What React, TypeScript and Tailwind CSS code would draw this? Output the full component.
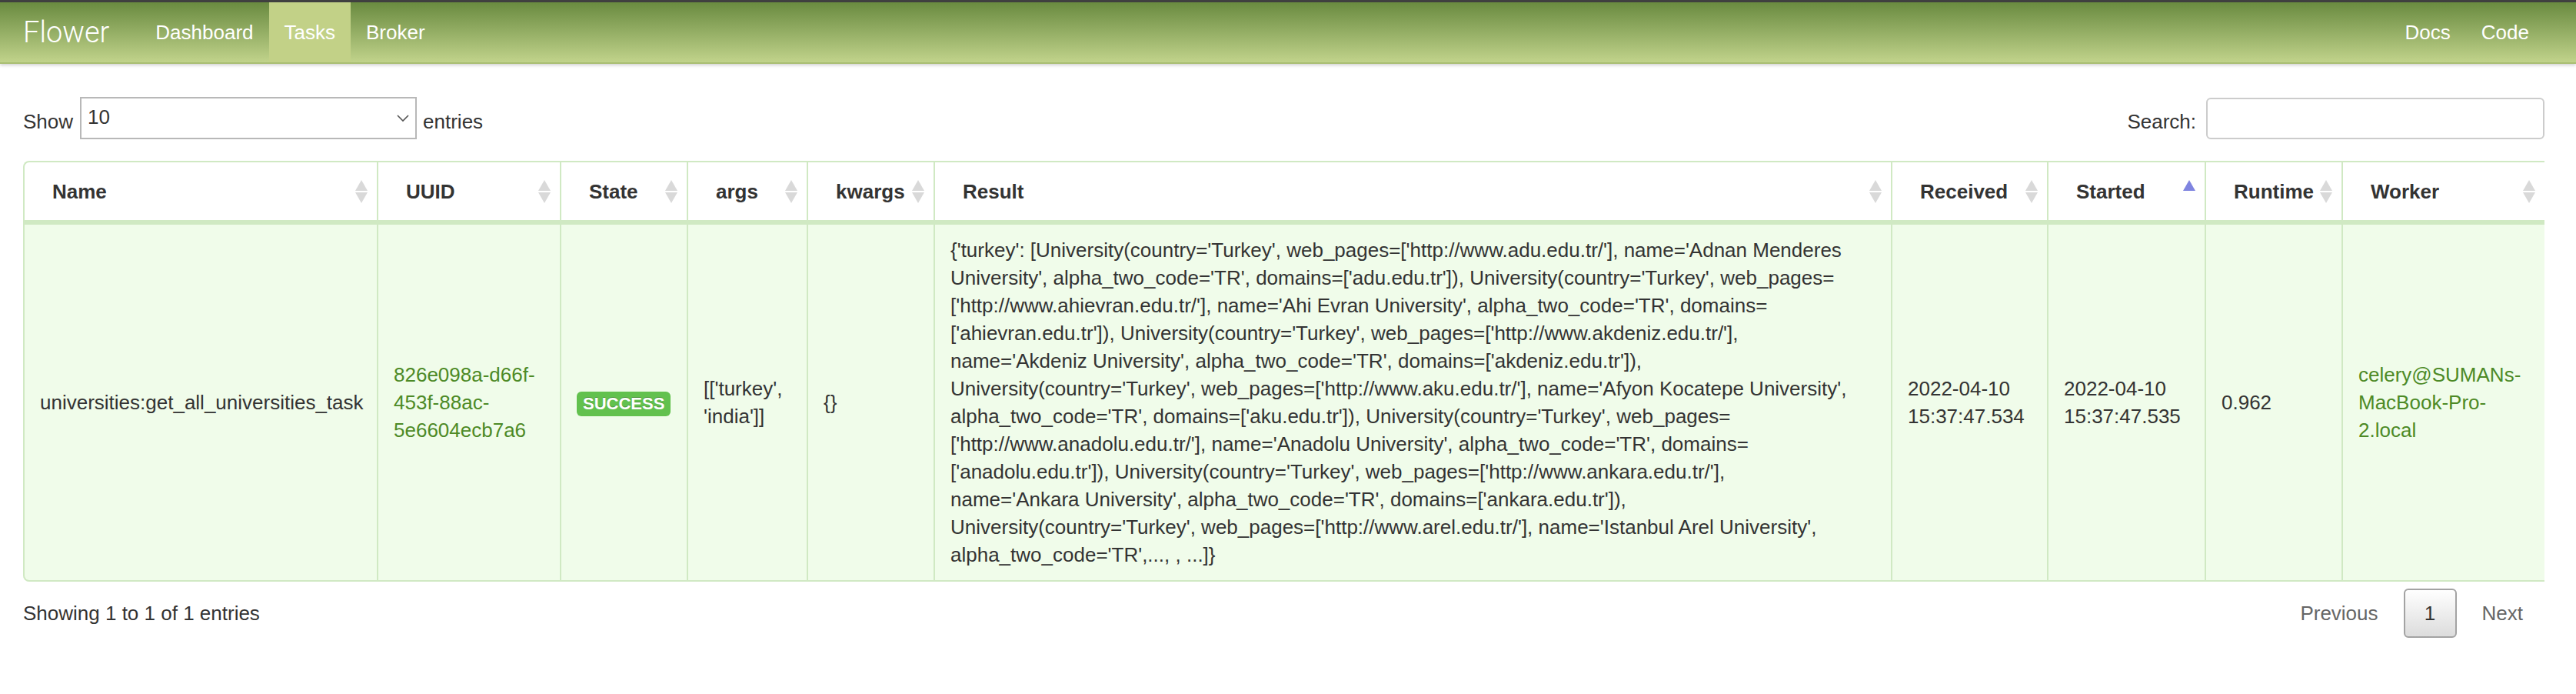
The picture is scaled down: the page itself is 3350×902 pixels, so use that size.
import React from 'react';

const COLS = [
  { name: 'Name', width: 460 },
  { name: 'UUID', width: 238 },
  { name: 'State', width: 165 },
  { name: 'args', width: 156 },
  { name: 'kwargs', width: 165 },
  { name: 'Result', width: 1245 },
  { name: 'Received', width: 203 },
  { name: 'Started', width: 205, sorted: true },
  { name: 'Runtime', width: 178 },
  { name: 'Worker', width: 264 },
];

const RESULT_LINES = [
  "{'turkey': [University(country='Turkey', web_pages=['http://www.adu.edu.tr/'], name='Adnan Menderes",
  "University', alpha_two_code='TR', domains=['adu.edu.tr']), University(country='Turkey', web_pages=",
  "['http://www.ahievran.edu.tr/'], name='Ahi Evran University', alpha_two_code='TR', domains=",
  "['ahievran.edu.tr']), University(country='Turkey', web_pages=['http://www.akdeniz.edu.tr/'],",
  "name='Akdeniz University', alpha_two_code='TR', domains=['akdeniz.edu.tr']),",
  "University(country='Turkey', web_pages=['http://www.aku.edu.tr/'], name='Afyon Kocatepe University',",
  "alpha_two_code='TR', domains=['aku.edu.tr']), University(country='Turkey', web_pages=",
  "['http://www.anadolu.edu.tr/'], name='Anadolu University', alpha_two_code='TR', domains=",
  "['anadolu.edu.tr']), University(country='Turkey', web_pages=['http://www.ankara.edu.tr/'],",
  "name='Ankara University', alpha_two_code='TR', domains=['ankara.edu.tr']),",
  "University(country='Turkey', web_pages=['http://www.arel.edu.tr/'], name='Istanbul Arel University',",
  "alpha_two_code='TR',..., , ...]}",
];

function SortIcon({ asc }: { asc?: boolean }) {
  return (
    <svg width="16" height="30" viewBox="0 0 16 30" className="absolute right-[12px] top-[23px]">
      {asc ? (
        <polygon points="8,0 16,14 0,14" fill="#7f84e0" />
      ) : (
        <>
          <polygon points="8,0 16,14 0,14" fill="#d9d9d9" />
          <polygon points="0,16 16,16 8,30" fill="#d9d9d9" />
        </>
      )}
    </svg>
  );
}

function Lines({ lines }: { lines: string[] }) {
  return (
    <>
      {lines.map((l, i) => (
        <div key={i} className="whitespace-nowrap">
          {l}
        </div>
      ))}
    </>
  );
}

function App() {
  const navItems = ['Dashboard', 'Tasks', 'Broker'];

  return (
    <div className="min-h-screen bg-white font-['Liberation_Sans',Arial,sans-serif] text-[26px] leading-[36px] text-[#333]">
      <div className="h-[3px] bg-[#404040]" />
      <nav className="relative z-10 h-[80px] flex items-stretch pl-[30px] pr-[41px] bg-linear-to-b from-[#6a8b40] to-[#c1d38b] border-b-2 border-[#a9be73] shadow-[0_2px_4px_rgba(0,0,0,0.18)]">
        <a className="self-center font-['Roboto',Arial,sans-serif] font-light text-[38px] leading-[44px] text-white">
          Flower
        </a>
        <ul className="ml-[40px] flex">
          {navItems.map((item) => (
            <li
              key={item}
              className={
                'flex items-center px-[20px] text-white ' +
                (item === 'Tasks' ? 'bg-[#c2d187]' : '')
              }
            >
              {item}
            </li>
          ))}
        </ul>
        <ul className="ml-auto flex">
          <li className="flex items-center px-[20px] text-white">Docs</li>
          <li className="flex items-center px-[20px] text-white">Code</li>
        </ul>
      </nav>

      <div className="pl-[30px] pr-[41px]">
        <div className="mt-[43px] flex h-[55px] items-center justify-between">
          <label className="flex items-center">
            <span className="pt-[8px]">Show</span>
            <div className="relative ml-[9px] mr-[8px] flex h-[55px] w-[438px] items-center border-2 border-[#b8b8b8] bg-white pl-[8px]">
              <span className="pb-[4px]">10</span>
              <svg
                width="16"
                height="10"
                viewBox="0 0 16 10"
                className="absolute right-[8px] top-[21px]"
                fill="none"
                stroke="#555"
                strokeWidth="1.6"
              >
                <polyline points="1,1 8,8 15,1" />
              </svg>
            </div>
            <span className="pt-[8px]">entries</span>
          </label>
          <label className="flex items-center">
            <span className="pt-[8px]">Search:</span>
            <input
              type="text"
              className="ml-[13px] h-[54px] w-[440px] rounded-[6px] border-2 border-[#cccccc] bg-white outline-none"
            />
          </label>
        </div>

        <div className="mt-[28px] overflow-hidden">
          <table className="w-full table-fixed border-separate border-spacing-0">
            <colgroup>
              {COLS.map((c) => (
                <col key={c.name} style={{ width: c.width }} />
              ))}
            </colgroup>
            <thead>
              <tr>
                {COLS.map((c, i) => (
                  <th
                    key={c.name}
                    className={
                      'relative border-l-2 border-t-2 border-b-[6px] border-[#d0e9c3] bg-white pl-[36px] pr-[20px] pt-[20px] pb-[19px] text-left font-bold text-[#333] ' +
                      (i === 0 ? 'rounded-tl-[8px]' : '')
                    }
                  >
                    {c.name}
                    <SortIcon asc={c.sorted} />
                  </th>
                ))}
              </tr>
            </thead>
            <tbody>
              <tr className="bg-[#f0fcea] align-middle">
                <td className="rounded-bl-[8px] border-l-2 border-b-2 border-[#d0e9c3] px-[20px] py-[15px] whitespace-nowrap">
                  universities:get_all_universities_task
                </td>
                <td className="border-l-2 border-b-2 border-[#d0e9c3] px-[20px] py-[15px] text-[#4d8a26]">
                  <Lines lines={['826e098a-d66f-', '453f-88ac-', '5e6604ecb7a6']} />
                </td>
                <td className="border-l-2 border-b-2 border-[#d0e9c3] px-[20px] py-[15px]">
                  <span className="inline-flex h-[32px] items-center rounded-[6px] bg-[#62c14e] px-[8px] text-[22px] font-bold leading-[32px] text-white [text-shadow:0_-1px_0_rgba(0,0,0,0.25)]">
                    SUCCESS
                  </span>
                </td>
                <td className="border-l-2 border-b-2 border-[#d0e9c3] px-[20px] py-[15px]">
                  <Lines lines={["[['turkey',", "'india']]"]} />
                </td>
                <td className="border-l-2 border-b-2 border-[#d0e9c3] px-[20px] py-[15px]">{'{}'}</td>
                <td className="border-l-2 border-b-2 border-[#d0e9c3] px-[20px] py-[15px]">
                  <Lines lines={RESULT_LINES} />
                </td>
                <td className="border-l-2 border-b-2 border-[#d0e9c3] px-[20px] py-[15px]">
                  <Lines lines={['2022-04-10', '15:37:47.534']} />
                </td>
                <td className="border-l-2 border-b-2 border-[#d0e9c3] px-[20px] py-[15px]">
                  <Lines lines={['2022-04-10', '15:37:47.535']} />
                </td>
                <td className="border-l-2 border-b-2 border-[#d0e9c3] px-[20px] py-[15px]">0.962</td>
                <td className="border-l-2 border-b-2 border-[#d0e9c3] px-[20px] py-[15px] text-[#4d8a26]">
                  <Lines lines={['celery@SUMANs-', 'MacBook-Pro-', '2.local']} />
                </td>
              </tr>
            </tbody>
          </table>
        </div>

        <div className="mt-[9px] flex h-[64px] items-center justify-between">
          <div>Showing 1 to 1 of 1 entries</div>
          <div className="flex items-center">
            <span className="px-[28px] text-[#666]">Previous</span>
            <span className="ml-[5px] flex h-[64px] w-[69px] items-center justify-center rounded-[6px] border-2 border-[#a3a3a3] bg-linear-to-b from-white to-[#dcdcdc] text-[#333]">
              1
            </span>
            <span className="ml-[5px] px-[28px] text-[#666]">Next</span>
          </div>
        </div>
      </div>
    </div>
  );
}

export default App;
